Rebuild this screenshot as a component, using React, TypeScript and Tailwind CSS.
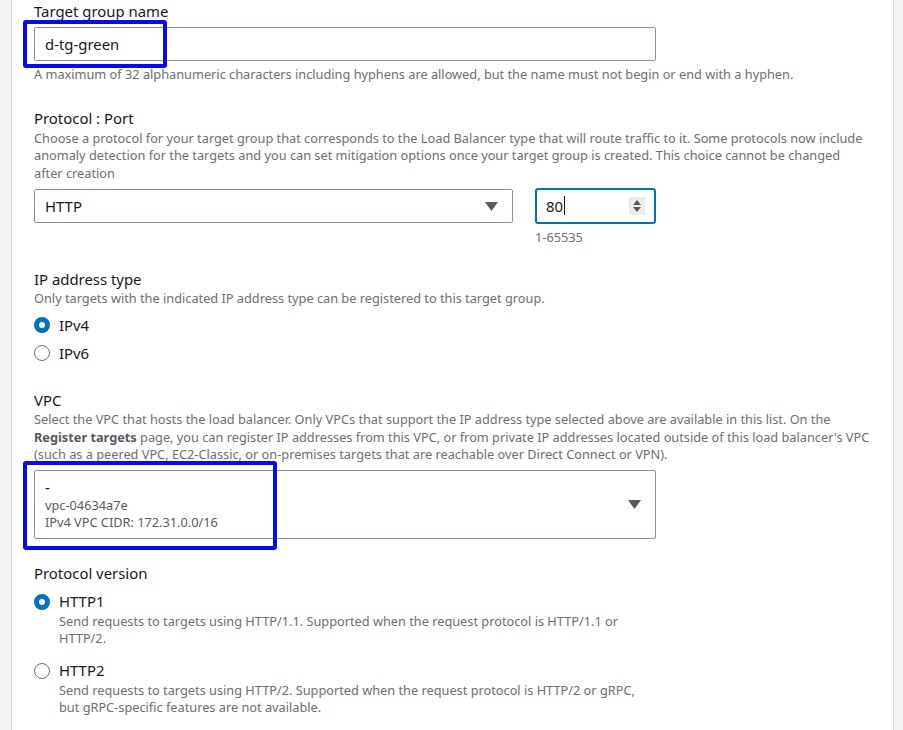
import React from 'react';

const font = { fontFamily: '"Noto Sans", "Open Sans", sans-serif' };

const Caret: React.FC<{ className?: string }> = ({ className }) => (
  <svg width="13" height="9" viewBox="0 0 13 9" className={className}>
    <path d="M0 0 L13 0 L6.5 9 Z" fill="#545b64" />
  </svg>
);

const Radio: React.FC<{ checked?: boolean; label: string; desc?: string[]; className?: string }> = ({
  checked,
  label,
  desc,
  className,
}) => (
  <div className={className}>
    <div className="flex items-center gap-[9px] h-[20px]">
      {checked ? (
        <span className="w-[16px] h-[16px] rounded-full border-[5px] border-[#0073bb] bg-white shrink-0" />
      ) : (
        <span className="w-[16px] h-[16px] rounded-full border-[1.5px] border-[#687078] bg-white shrink-0" />
      )}
      <span className="text-[14.9px] text-[#16191f]">{label}</span>
    </div>
    {desc && (
      <p className="ml-[25px] mt-[1px] w-[620px] text-[12.75px] leading-[17.5px] text-[#687078]">
        {desc.map((d, i) => (
          <span key={i} className="block">
            {d}
          </span>
        ))}
      </p>
    )}
  </div>
);

const App: React.FC = () => {
  return (
    <div className="flex h-[730px] w-[903px] overflow-hidden bg-[#f2f3f3]" style={font}>
      <div className="w-[12px] shrink-0 border-r border-[#d5dbdb]" />
      <div className="flex-1 bg-white pl-[22px] pr-[10px] pt-[1px]">
        {/* Target group name */}
        <label className="block text-[14.9px] leading-[20px] text-[#16191f]">Target group name</label>
        <div className="relative mt-[6px] w-[622px]">
          <div className="h-[34px] rounded-[2px] border border-[#879596] px-[10px] flex items-center text-[14.9px] text-[#16191f]">
            d-tg-green
          </div>
          <div className="absolute left-[-11px] top-[-7px] w-[144px] h-[48px] rounded-[3px] border-[4px] border-[#0a0af0]" />
        </div>
        <p className="mt-[5px] text-[12.75px] leading-[17.5px] text-[#687078]">
          A maximum of 32 alphanumeric characters including hyphens are allowed, but the name must not begin or end with a hyphen.
        </p>

        {/* Protocol : Port */}
        <label className="mt-[24px] block text-[14.9px] leading-[20px] text-[#16191f]">Protocol : Port</label>
        <p className="mt-[2px] whitespace-nowrap text-[12.75px] leading-[17.5px] text-[#687078]">
          Choose a protocol for your target group that corresponds to the Load Balancer type that will route traffic to it. Some protocols now include
          <br />
          anomaly detection for the targets and you can set mitigation options once your target group is created. This choice cannot be changed
          <br />
          after creation
        </p>
        <div className="mt-[6px] flex items-start gap-[22px]">
          <div className="mt-[1px] h-[34px] w-[479px] rounded-[2px] border border-[#879596] pl-[10px] pr-[14px] flex items-center justify-between text-[14.9px] text-[#16191f]">
            <span>HTTP</span>
            <Caret />
          </div>
          <div>
            <div className="h-[36px] w-[121px] rounded-[3px] border-2 border-[#0073bb] pl-[9px] pr-[9px] flex items-center justify-between text-[14.9px] text-[#16191f]">
              <span className="flex items-center">
                80<span className="ml-[1px] inline-block h-[19px] w-[1px] bg-[#16191f]" />
              </span>
              <span className="flex h-[18px] w-[16px] flex-col items-center justify-center gap-[2px] bg-[#ececec]">
                <svg width="8" height="5" viewBox="0 0 8 5">
                  <path d="M0 5 L8 5 L4 0 Z" fill="#545b64" />
                </svg>
                <svg width="8" height="5" viewBox="0 0 8 5">
                  <path d="M0 0 L8 0 L4 5 Z" fill="#545b64" />
                </svg>
              </span>
            </div>
            <p className="mt-[5px] text-[12.75px] leading-[17.5px] text-[#687078]">1-65535</p>
          </div>
        </div>

        {/* IP address type */}
        <label className="mt-[22px] block text-[14.9px] leading-[20px] text-[#16191f]">IP address type</label>
        <p className="mt-[1px] text-[12.75px] leading-[17.5px] text-[#687078]">
          Only targets with the indicated IP address type can be registered to this target group.
        </p>
        <Radio checked label="IPv4" className="mt-[8px]" />
        <Radio label="IPv6" className="mt-[8px]" />

        {/* VPC */}
        <label className="mt-[27px] block text-[14.9px] leading-[20px] text-[#16191f]">VPC</label>
        <p className="mt-[1px] whitespace-nowrap text-[12.75px] leading-[17.5px] text-[#687078]">
          Select the VPC that hosts the load balancer. Only VPCs that support the IP address type selected above are available in this list. On the
          <br />
          <span className="font-bold text-[#545b64]">Register targets</span> page, you can register IP addresses from this VPC, or from private IP addresses located outside of this load balancer's VPC
          <br />
          (such as a peered VPC, EC2-Classic, or on-premises targets that are reachable over Direct Connect or VPN).
        </p>
        <div className="relative mt-[6px] w-[622px]">
          <div className="h-[69px] rounded-[2px] border border-[#879596] pl-[10px] pr-[14px] pt-[6px] flex items-start justify-between">
            <div>
              <div className="text-[14.9px] leading-[20px] text-[#16191f]">-</div>
              <div className="text-[12.75px] leading-[17.5px] text-[#545b64]">vpc-04634a7e</div>
              <div className="text-[12.75px] leading-[17.5px] text-[#545b64]">IPv4 VPC CIDR: 172.31.0.0/16</div>
            </div>
            <Caret className="mt-[23px]" />
          </div>
          <div className="absolute left-[-11px] top-[-9px] w-[254px] h-[89px] rounded-[3px] border-[4px] border-[#0a0af0]" />
        </div>

        {/* Protocol version */}
        <label className="mt-[24px] block text-[14.9px] leading-[20px] text-[#16191f]">Protocol version</label>
        <Radio
          checked
          label="HTTP1"
          className="mt-[9px]"
          desc={['Send requests to targets using HTTP/1.1. Supported when the request protocol is HTTP/1.1 or', 'HTTP/2.']}
        />
        <Radio
          label="HTTP2"
          className="mt-[13px]"
          desc={['Send requests to targets using HTTP/2. Supported when the request protocol is HTTP/2 or gRPC,', 'but gRPC-specific features are not available.']}
        />
      </div>
      <div className="w-[10px] shrink-0 border-l border-[#d5dbdb]" />
    </div>
  );
};

export default App;
